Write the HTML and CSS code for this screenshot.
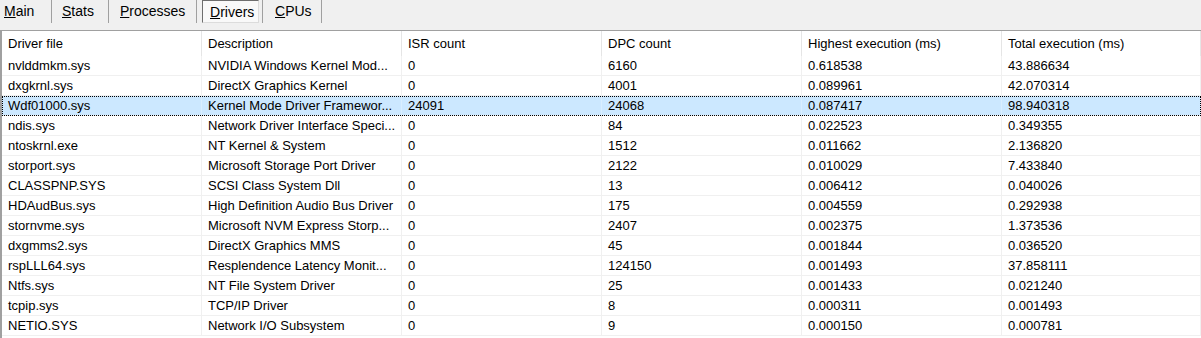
FILE: index.html
```html
<!DOCTYPE html>
<html>
<head>
    <meta charset="utf-8">
    <title>Drivers</title>
    <link rel="stylesheet" href="styles.css">
</head>
<body>

    <div class="tabs">
        <div class="tab tab-main"><u>M</u>ain</div>
        <div class="tab tab-stats"><u>S</u>tats</div>
        <div class="tab tab-processes"><u>P</u>rocesses</div>
        <div class="tab tab-drivers"><div class="pressed"><u>D</u>rivers</div></div>
        <div class="tab tab-cpus"><u>C</u>PUs</div>
    </div>

    <div class="list">
        <div class="row head">
            <div>Driver file</div>
            <div>Description</div>
            <div>ISR count</div>
            <div>DPC count</div>
            <div>Highest execution (ms)</div>
            <div>Total execution (ms)</div>
        </div>
        <div id="rows"></div>
    </div>

    <script>
        var drivers = [
            ["nvlddmkm.sys", "NVIDIA Windows Kernel Mod...", "0", "6160", "0.618538", "43.886634"],
            ["dxgkrnl.sys", "DirectX Graphics Kernel", "0", "4001", "0.089961", "42.070314"],
            ["Wdf01000.sys", "Kernel Mode Driver Framewor...", "24091", "24068", "0.087417", "98.940318"],
            ["ndis.sys", "Network Driver Interface Speci...", "0", "84", "0.022523", "0.349355"],
            ["ntoskrnl.exe", "NT Kernel & System", "0", "1512", "0.011662", "2.136820"],
            ["storport.sys", "Microsoft Storage Port Driver", "0", "2122", "0.010029", "7.433840"],
            ["CLASSPNP.SYS", "SCSI Class System Dll", "0", "13", "0.006412", "0.040026"],
            ["HDAudBus.sys", "High Definition Audio Bus Driver", "0", "175", "0.004559", "0.292938"],
            ["stornvme.sys", "Microsoft NVM Express Storp...", "0", "2407", "0.002375", "1.373536"],
            ["dxgmms2.sys", "DirectX Graphics MMS", "0", "45", "0.001844", "0.036520"],
            ["rspLLL64.sys", "Resplendence Latency Monit...", "0", "124150", "0.001493", "37.858111"],
            ["Ntfs.sys", "NT File System Driver", "0", "25", "0.001433", "0.021240"],
            ["tcpip.sys", "TCP/IP Driver", "0", "8", "0.000311", "0.001493"],
            ["NETIO.SYS", "Network I/O Subsystem", "0", "9", "0.000150", "0.000781"]
        ];

        var rows = document.getElementById("rows");
        var html = "";
        for (var i = 0; i < drivers.length; i++) {
            html += "<div class='row" + (i == 2 ? " selected" : "") + "'>";
            for (var c = 0; c < drivers[i].length; c++) {
                html += "<div>" + drivers[i][c].replace("&", "&amp;") + "</div>";
            }
            html += "</div>";
        }
        rows.innerHTML = html;
    </script>

</body>
</html>
```

FILE: styles.css
```css
html {
    font-family: "Liberation Sans", Arial, sans-serif;
}

body {
    margin: 0;
    background-color: #f0f0f0;
    color: #000;
    overflow: hidden;
}

.tabs {
    display: flex;
    height: 30px;
    font-size: 14px;
}

.tab {
    box-sizing: border-box;
    height: 23px;
    border-right: 1px solid #a0a0a0;
    padding-top: 3px;
    padding-left: 11px;
    line-height: 16px;
}

.tab-main { width: 52px; padding-left: 4px; }
.tab-stats { width: 57px; padding-left: 10px; }
.tab-processes { width: 88px; }
.tab-drivers { width: 66px; padding: 0 3px 0 5px; }
.tab-cpus { width: 59px; padding-left: 12px; }

.pressed {
    box-sizing: border-box;
    height: 23px;
    padding: 3px 0 0 7px;
    background-color: #f9f9f9;
    border-top: 1px solid #6e6e6e;
    border-left: 1px solid #6e6e6e;
    border-bottom: 1px solid #dcdcdc;
    border-right: 1px solid #dcdcdc;
}

.list {
    background-color: #fff;
    border-top: 1px solid #a0a0a0;
    border-left: 2px solid #a0a0a0;
    height: 308px;
    font-size: 13px;
}

.row {
    display: grid;
    grid-template-columns: 200px 200px 200px 200px 200px 1fr;
    height: 20px;
    box-sizing: border-box;
    border-bottom: 1px solid #f0f0f0;
    line-height: 19px;
    white-space: nowrap;
}

.row div {
    padding-left: 6px;
    border-right: 1px solid #f0f0f0;
    overflow: hidden;
}

.row.head {
    height: 25px;
    border-bottom: none;
    line-height: 25px;
}

.row.head div {
    border-right-color: #e5e5e5;
}

.row.selected {
    background-color: #cce8ff;
    outline: 1px dotted #000;
    outline-offset: -1px;
}

.row.selected div {
    border-right-color: #d9eeff;
}
```
